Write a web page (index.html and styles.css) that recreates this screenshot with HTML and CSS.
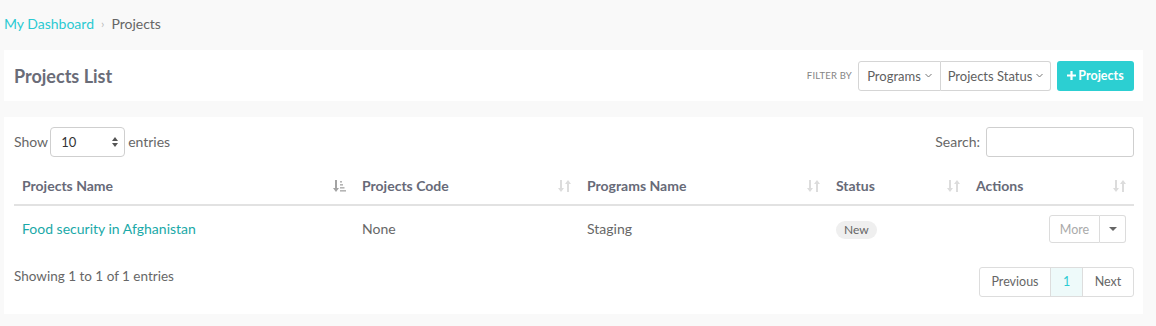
FILE: index.html
```html
<!DOCTYPE html>
<html>
<head>
	<title>Projects</title>
	<link rel="stylesheet" href="styles.css">
</head>
<body>
	<div class="page">
		<div class="breadcrumb">
			<a href="#">My Dashboard</a>
			<span class="sep">›</span>
			<span class="current">Projects</span>
		</div>

		<div class="panel header-panel">
			<h1>Projects List</h1>
			<div class="toolbar">
				<span class="filter-label">FILTER BY</span>
				<div class="btn-group">
					<button class="btn">Programs <svg class="chev" width="7" height="5" viewBox="0 0 7 5"><path d="M0.5 1 L3.5 4 L6.5 1" fill="none" stroke="#777" stroke-width="1"/></svg></button>
					<button class="btn">Projects Status <svg class="chev" width="7" height="5" viewBox="0 0 7 5"><path d="M0.5 1 L3.5 4 L6.5 1" fill="none" stroke="#777" stroke-width="1"/></svg></button>
				</div>
				<button class="btn-primary"><svg width="9" height="9" viewBox="0 0 9 9"><path d="M3.4 0h2.2v3.4H9v2.2H5.6V9H3.4V5.6H0V3.4h3.4z" fill="#fff"/></svg>Projects</button>
			</div>
		</div>

		<div class="panel table-panel">
			<div class="controls">
				<label class="length">Show
					<span class="select">10
						<svg width="6" height="10" viewBox="0 0 6 10"><path d="M3 0 L6 4 H0z M0 6 H6 L3 10z" fill="#555"/></svg>
					</span>
					entries</label>
				<label class="search">Search: <input type="text"></label>
			</div>

			<table class="data">
				<thead>
					<tr>
						<th class="c1"><div class="th">Projects Name
							<svg class="sort active" width="13" height="12" viewBox="0 0 13 12"><path d="M2 0h2v8h2l-3 4-3-4h2z" fill="#a3a3a3"/><rect x="7" y="1" width="2" height="1.6" fill="#b5b5b5"/><rect x="7" y="4" width="3" height="1.6" fill="#b5b5b5"/><rect x="7" y="7" width="4.5" height="1.6" fill="#b5b5b5"/><rect x="7" y="10" width="6" height="1.6" fill="#b5b5b5"/></svg></div></th>
						<th class="c2"><div class="th">Projects Code
							<svg class="sort" width="13" height="12" viewBox="0 0 13 12"><path d="M2 0h2v8h2l-3 4-3-4h2z M9 12h2V4h2L10 0 7 4h2z" fill="#dcdcdc"/></svg></div></th>
						<th class="c3"><div class="th">Programs Name
							<svg class="sort" width="13" height="12" viewBox="0 0 13 12"><path d="M2 0h2v8h2l-3 4-3-4h2z M9 12h2V4h2L10 0 7 4h2z" fill="#dcdcdc"/></svg></div></th>
						<th class="c4"><div class="th">Status
							<svg class="sort" width="13" height="12" viewBox="0 0 13 12"><path d="M2 0h2v8h2l-3 4-3-4h2z M9 12h2V4h2L10 0 7 4h2z" fill="#dcdcdc"/></svg></div></th>
						<th class="c5"><div class="th">Actions
							<svg class="sort" width="13" height="12" viewBox="0 0 13 12"><path d="M2 0h2v8h2l-3 4-3-4h2z M9 12h2V4h2L10 0 7 4h2z" fill="#dcdcdc"/></svg></div></th>
					</tr>
				</thead>
				<tbody>
					<tr>
						<td><a href="#" class="project-link">Food security in Afghanistan</a></td>
						<td>None</td>
						<td>Staging</td>
						<td><span class="badge">New</span></td>
						<td class="actions">
							<div class="split">
								<button class="more">More</button>
								<button class="caret"><svg width="8" height="4" viewBox="0 0 8 4"><path d="M0 0h8L4 4z" fill="#666"/></svg></button>
							</div>
						</td>
					</tr>
				</tbody>
			</table>

			<div class="footer">
				<div class="info">Showing 1 to 1 of 1 entries</div>
				<div class="pagination">
					<a href="#" class="page-btn prev">Previous</a>
					<a href="#" class="page-btn current">1</a>
					<a href="#" class="page-btn next">Next</a>
				</div>
			</div>
		</div>
	</div>
</body>
</html>
```

FILE: styles.css
```css
body {
	margin: 0;
	background-color: #f9f9f9;
	font-family: Lato, "Open Sans", sans-serif;
	font-size: 14px;
	color: #676767;
}
.page {
	margin: 0 13px 0 4px;
}
.breadcrumb {
	height: 50px;
	display: flex;
	align-items: center;
	gap: 7px;
	padding-bottom: 4px;
	box-sizing: border-box;
}
.breadcrumb a {
	color: #2bcad2;
	text-decoration: none;
}
.breadcrumb .sep {
	color: #bbb;
	font-size: 12px;
}
.breadcrumb .current {
	color: #666;
}
.panel {
	background-color: #fff;
}
.header-panel {
	height: 51px;
	display: flex;
	align-items: center;
	justify-content: space-between;
	padding: 0 9px 0 10px;
}
.header-panel h1 {
	margin: 0;
	font-size: 18px;
	font-weight: 700;
	color: #6a6c78;
}
.toolbar {
	display: flex;
	align-items: center;
}
.filter-label {
	font-size: 9.5px;
	color: #858585;
	margin-right: 6px;
	letter-spacing: 0.2px;
}
.btn-group {
	display: flex;
	margin-right: 6px;
}
.btn {
	height: 30px;
	background: #fff;
	border: 1px solid #d5d5d5;
	font-family: inherit;
	font-size: 13px;
	color: #5f5f5f;
	padding: 0;
	display: flex;
	align-items: center;
	justify-content: center;
	gap: 4px;
	white-space: nowrap;
	cursor: pointer;
}
.btn:first-child {
	border-radius: 3px 0 0 3px;
	width: 83px;
}
.btn:last-child {
	border-left: none;
	border-radius: 0 3px 3px 0;
	width: 110px;
}
.btn-primary {
	height: 30px;
	width: 77px;
	background-color: #2ccfd2;
	border: none;
	border-radius: 3px;
	color: #fff;
	font-family: inherit;
	font-weight: 700;
	font-size: 12.5px;
	display: flex;
	align-items: center;
	justify-content: center;
	gap: 2px;
	cursor: pointer;
}
.table-panel {
	margin-top: 16px;
	padding: 10px 9px 17px 10px;
}
.controls {
	display: flex;
	justify-content: space-between;
	align-items: center;
	height: 30px;
}
.length, .search {
	display: flex;
	align-items: center;
	color: #676767;
	padding-bottom: 2px;
}
.select {
	width: 75px;
	height: 30px;
	box-sizing: border-box;
	border: 1px solid #cfcfcf;
	border-radius: 4px;
	margin: 2px 3px 0 2px;
	padding: 0 6px 0 10px;
	display: flex;
	align-items: center;
	justify-content: space-between;
	font-size: 13px;
	color: #333;
}
.search input {
	width: 148px;
	height: 30px;
	box-sizing: border-box;
	border: 1px solid #cfcfcf;
	border-radius: 3px;
	margin: 2px 0 0 6px;
}
.data {
	width: 100%;
	border-collapse: collapse;
	margin-top: 9px;
}
.data th {
	text-align: left;
	padding: 10px 8px 8px;
	line-height: 20px;
	font-weight: 700;
	color: #676a78;
	border-bottom: 2px solid #e2e2e2;
}
.th {
	display: flex;
	justify-content: space-between;
	align-items: center;
}
.c1 { width: 324px; }
.c2 { width: 209px; }
.c3 { width: 233px; }
.c4 { width: 124px; }
.data td {
	padding: 9px 8px 8px;
	line-height: 20px;
	vertical-align: middle;
	color: #676767;
}
.project-link {
	color: #1aa9a8;
	text-decoration: none;
}
.badge {
	display: inline-block;
	background-color: #efefef;
	border-radius: 9px;
	padding: 0 8px;
	font-size: 12px;
	line-height: 18px;
	color: #666;
}
.actions {
	text-align: right;
}
.split {
	display: inline-flex;
	height: 28px;
}
.split button {
	background: #fff;
	border: 1px solid #dcdcdc;
	font-family: inherit;
	cursor: pointer;
}
.more {
	width: 51px;
	border-radius: 3px 0 0 3px;
	color: #aaa;
	font-size: 12.5px;
}
.caret {
	width: 26px;
	border-left: none !important;
	border-radius: 0 3px 3px 0;
	display: flex;
	align-items: center;
	justify-content: center;
}
.footer {
	display: flex;
	justify-content: space-between;
	align-items: flex-start;
	margin-top: 15px;
}
.info {
	line-height: 20px;
	font-size: 13.5px;
}
.pagination {
	display: flex;
	border: 1px solid #ddd;
	border-radius: 3px;
	margin-top: 1px;
}
.page-btn {
	height: 28px;
	line-height: 28px;
	font-size: 12.5px;
	color: #666;
	text-decoration: none;
	text-align: center;
}
.page-btn + .page-btn {
	border-left: 1px solid #ddd;
}
.prev { width: 70px; }
.next { width: 50px; }
.page-btn.current {
	width: 31px;
	background-color: #eefafa;
	color: #2bcad2;
}
```
